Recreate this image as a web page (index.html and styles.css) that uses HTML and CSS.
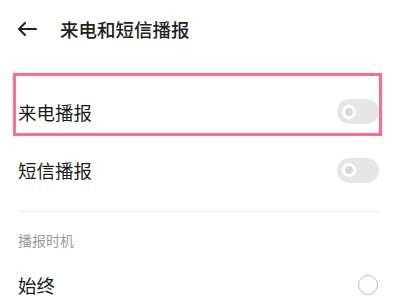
FILE: index.html
```html
<!DOCTYPE html>
<html lang="zh-CN">
<head>
    <meta charset="UTF-8">
    <meta name="viewport" content="width=device-width, initial-scale=1.0">
    <title>来电和短信播报</title>
    <link rel="stylesheet" href="styles.css">
</head>
<body>
    <div class="header">
        <svg class="back-icon" width="20" height="14" viewBox="0 0 20 14">
            <path d="M19 7 H2 M8 1 L2 7 L8 13" fill="none" stroke="#222" stroke-width="2" stroke-linecap="round" stroke-linejoin="round"/>
        </svg>
        <h1 class="page-title">来电和短信播报</h1>
    </div>

    <div class="list">
        <div class="highlight">
            <div class="setting-row first">
                <span class="setting-name">来电播报</span>
                <span class="switch"><span class="knob"></span></span>
            </div>
        </div>

        <div class="setting-row">
            <span class="setting-name">短信播报</span>
            <span class="switch"><span class="knob"></span></span>
        </div>

        <div class="divider"></div>

        <div class="section-label">播报时机</div>

        <div class="setting-row option">
            <span class="setting-name">始终</span>
            <span class="radio"></span>
        </div>
    </div>
</body>
</html>
```

FILE: styles.css
```css
body {
    margin: 0;
    background-color: #fff;
    color: #1c1c1c;
    font-family: "Noto Sans CJK SC", "Noto Sans", sans-serif;
    width: 400px;
    overflow: hidden;
}

.header {
    height: 58px;
    display: flex;
    align-items: center;
    padding-left: 17px;
}

.back-icon {
    display: block;
    margin-right: 23px;
}

.page-title {
    margin: 0;
    font-size: 18.5px;
    font-weight: 500;
    color: #222;
    line-height: 24px;
}

.list {
    padding-top: 15px;
}

.highlight {
    margin: 0 18px 0 13px;
    border: 3px solid #ff6b93;
    padding: 22px 0 8px 2px;
}

.setting-row {
    display: flex;
    align-items: center;
    justify-content: space-between;
    height: 68px;
    margin: 0 21px 0 18px;
}

.setting-row.first {
    height: 27px;
    margin: 0;
}

.setting-row.option {
    height: 70px;
    margin-right: 22px;
}

.setting-name {
    font-size: 18.5px;
    line-height: 24px;
}

.switch {
    width: 42px;
    height: 25px;
    border-radius: 13px;
    background-color: #e6e6e6;
    display: flex;
    align-items: center;
    padding-left: 5px;
    box-sizing: border-box;
}

.knob {
    width: 14px;
    height: 14px;
    border-radius: 50%;
    border: 3.5px solid #fff;
    background-color: #d8d8d8;
    box-sizing: border-box;
}

.divider {
    height: 1px;
    background-color: #ececec;
    margin: 7px 22px 0 18px;
}

.section-label {
    font-size: 14px;
    line-height: 20px;
    color: #9a9a9a;
    margin: 18px 0 0 18px;
}

.radio {
    width: 20px;
    height: 20px;
    border-radius: 50%;
    border: 1.5px solid #bdbdbd;
    box-sizing: border-box;
}
```
